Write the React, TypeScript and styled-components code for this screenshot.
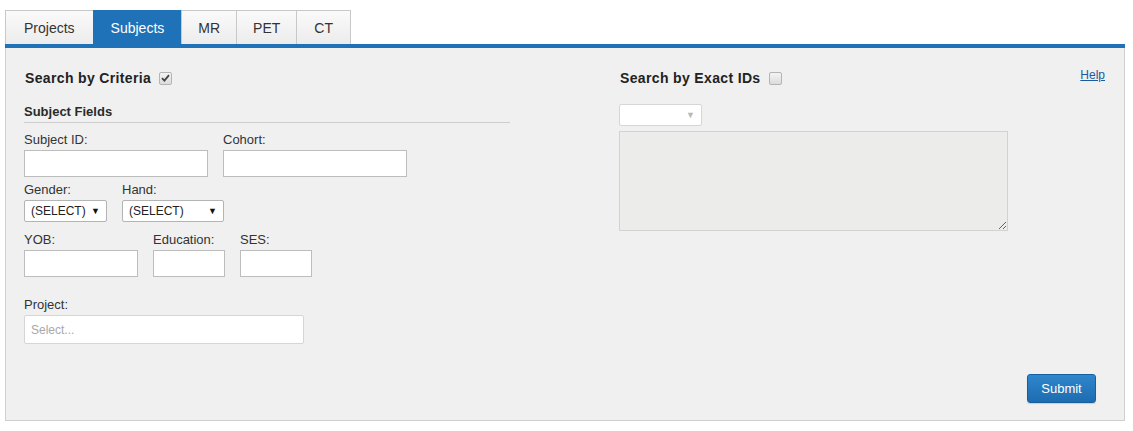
import * as React from 'react'
import styled, { createGlobalStyle } from 'styled-components'

const GlobalStyle = createGlobalStyle`
    body {
        margin: 0;
        background: #fff;
        font-family: "Liberation Sans", Arial, sans-serif;
        color: #333;
    }
`;

const Page = styled.div`
    padding: 10px 8px 10px 5px;
    width: 1120px;
`;

const TabBar = styled.div`
    display: flex;
    border-bottom: 4px solid #1f72b8;
`;

const Tab = styled.div<{ $active?: boolean; $pad: number }>`
    height: 34px;
    line-height: 34px;
    padding: 0 ${(p) => p.$pad}px;
    font-size: 14px;
    border: 1px solid ${(p) => (p.$active ? '#1f72b8' : '#c8c8c8')};
    border-bottom: none;
    border-right: none;
    box-sizing: border-box;
    color: ${(p) => (p.$active ? '#fff' : '#333')};
    background: ${(p) => (p.$active ? '#1f72b8' : 'linear-gradient(#fafafa, #ececec)')};
    &:last-child {
        border-right: 1px solid #c8c8c8;
    }
`;

const Panel = styled.div`
    background: #f0f0f0;
    border: 1px solid #cfcfcf;
    border-top: none;
    padding: 20px 19px 17px 18px;
`;

const Columns = styled.div`
    display: flex;
    gap: 109px;
`;

const LeftCol = styled.div`
    width: 486px;
`;

const RightCol = styled.div`
    flex: 1;
`;

const TitleRow = styled.div`
    display: flex;
    align-items: center;
    height: 20px;
    gap: 8px;
`;

const Title = styled.div`
    font-size: 14px;
    font-weight: bold;
    letter-spacing: 0.35px;
    color: #222;
    padding-left: 1px;
`;

const HelpLink = styled.a`
    margin-left: auto;
    align-self: flex-start;
    font-size: 12px;
    color: #1a5aa0;
    text-decoration: underline;
`;

const Check = styled.span`
    display: inline-flex;
    align-items: center;
    justify-content: center;
    width: 11px;
    height: 11px;
    border: 1px solid #b4b4b4;
    border-radius: 2px;
    background: linear-gradient(#f4f4f4, #dcdcdc);
`;

const SectionTitle = styled.div`
    margin-top: 16px;
    font-size: 13px;
    font-weight: bold;
    line-height: 16px;
    padding-bottom: 2px;
    border-bottom: 1px solid #cdcdcd;
    color: #2a2a2a;
`;

const FieldRow = styled.div<{ $top: number }>`
    display: flex;
    gap: 15px;
    margin-top: ${(p) => p.$top}px;
`;

const Field = styled.div`
    display: flex;
    flex-direction: column;
`;

const Label = styled.label`
    font-size: 13px;
    line-height: 15px;
    color: #333;
    margin-bottom: 3px;
`;

const TextInput = styled.input<{ $w: number }>`
    width: ${(p) => p.$w}px;
    height: 27px;
    box-sizing: border-box;
    border: 1px solid #bdbdbd;
    background: #fff;
    margin: 0;
    padding: 0 4px;
`;

const SelectBox = styled.div<{ $w: number; $h: number; $disabled?: boolean }>`
    display: flex;
    align-items: center;
    justify-content: space-between;
    width: ${(p) => p.$w}px;
    height: ${(p) => p.$h}px;
    box-sizing: border-box;
    padding: 0 6px;
    border: 1px solid ${(p) => (p.$disabled ? '#d6d6d6' : '#b4b4b4')};
    border-radius: 2px;
    background: #fff;
    font-size: 12px;
    color: #222;
`;

const Arrow = styled.span<{ $light?: boolean }>`
    font-size: 9px;
    color: ${(p) => (p.$light ? '#b8b8b8' : '#111')};
`;

const Placeholder = styled.span`
    color: #a8a8a8;
    font-size: 12px;
`;

const IdsArea = styled.textarea`
    display: block;
    width: 389px;
    height: 100px;
    box-sizing: border-box;
    margin-top: 5px;
    background: #ececea;
    border: 1px solid #d2d2d2;
    resize: both;
`;

const Footer = styled.div`
    display: flex;
    justify-content: flex-end;
    margin-top: 30px;
    padding-right: 9px;
`;

const SubmitButton = styled.button`
    width: 69px;
    height: 29px;
    border: 1px solid #17609e;
    border-radius: 3px;
    background: linear-gradient(#2f86cc, #1d6cb1);
    color: #fff;
    font-family: "Liberation Sans", Arial, sans-serif;
    font-size: 13px;
    box-shadow: 0 1px 1px rgba(0, 0, 0, 0.15);
`;

const tabs = [
    { name: 'Projects', pad: 18 },
    { name: 'Subjects', pad: 17, active: true },
    { name: 'MR', pad: 16 },
    { name: 'PET', pad: 16 },
    { name: 'CT', pad: 17 },
];

const CheckMark = () => (
    <svg width="9" height="8" viewBox="0 0 9 8">
        <path d="M1 4.2 L3.4 6.6 L8 1.2" stroke="#444" strokeWidth="1.8" fill="none" />
    </svg>
);

export default function App() {
    return (
        <Page>
            <GlobalStyle />
            <TabBar>
                {tabs.map((t) => (
                    <Tab key={t.name} $active={t.active} $pad={t.pad}>{t.name}</Tab>
                ))}
            </TabBar>
            <Panel>
                <Columns>
                    <LeftCol>
                        <TitleRow>
                            <Title>Search by Criteria</Title>
                            <Check><CheckMark /></Check>
                        </TitleRow>
                        <SectionTitle>Subject Fields</SectionTitle>
                        <FieldRow $top={9}>
                            <Field>
                                <Label>Subject ID:</Label>
                                <TextInput $w={184} />
                            </Field>
                            <Field>
                                <Label>Cohort:</Label>
                                <TextInput $w={184} />
                            </Field>
                        </FieldRow>
                        <FieldRow $top={5}>
                            <Field>
                                <Label>Gender:</Label>
                                <SelectBox $w={83} $h={22}>(SELECT) <Arrow>▼</Arrow></SelectBox>
                            </Field>
                            <Field>
                                <Label>Hand:</Label>
                                <SelectBox $w={102} $h={22}>(SELECT) <Arrow>▼</Arrow></SelectBox>
                            </Field>
                        </FieldRow>
                        <FieldRow $top={10}>
                            <Field>
                                <Label>YOB:</Label>
                                <TextInput $w={114} />
                            </Field>
                            <Field>
                                <Label>Education:</Label>
                                <TextInput $w={72} />
                            </Field>
                            <Field>
                                <Label>SES:</Label>
                                <TextInput $w={72} />
                            </Field>
                        </FieldRow>
                        <FieldRow $top={20}>
                            <Field>
                                <Label>Project:</Label>
                                <SelectBox $w={280} $h={29} $disabled>
                                    <Placeholder>Select...</Placeholder>
                                </SelectBox>
                            </Field>
                        </FieldRow>
                    </LeftCol>
                    <RightCol>
                        <TitleRow>
                            <Title>Search by Exact IDs</Title>
                            <Check />
                            <HelpLink href="#">Help</HelpLink>
                        </TitleRow>
                        <FieldRow $top={16}>
                            <SelectBox $w={83} $h={22} $disabled>
                                <span />
                                <Arrow $light>▼</Arrow>
                            </SelectBox>
                        </FieldRow>
                        <IdsArea readOnly />
                    </RightCol>
                </Columns>
                <Footer>
                    <SubmitButton>Submit</SubmitButton>
                </Footer>
            </Panel>
        </Page>
    );
}
